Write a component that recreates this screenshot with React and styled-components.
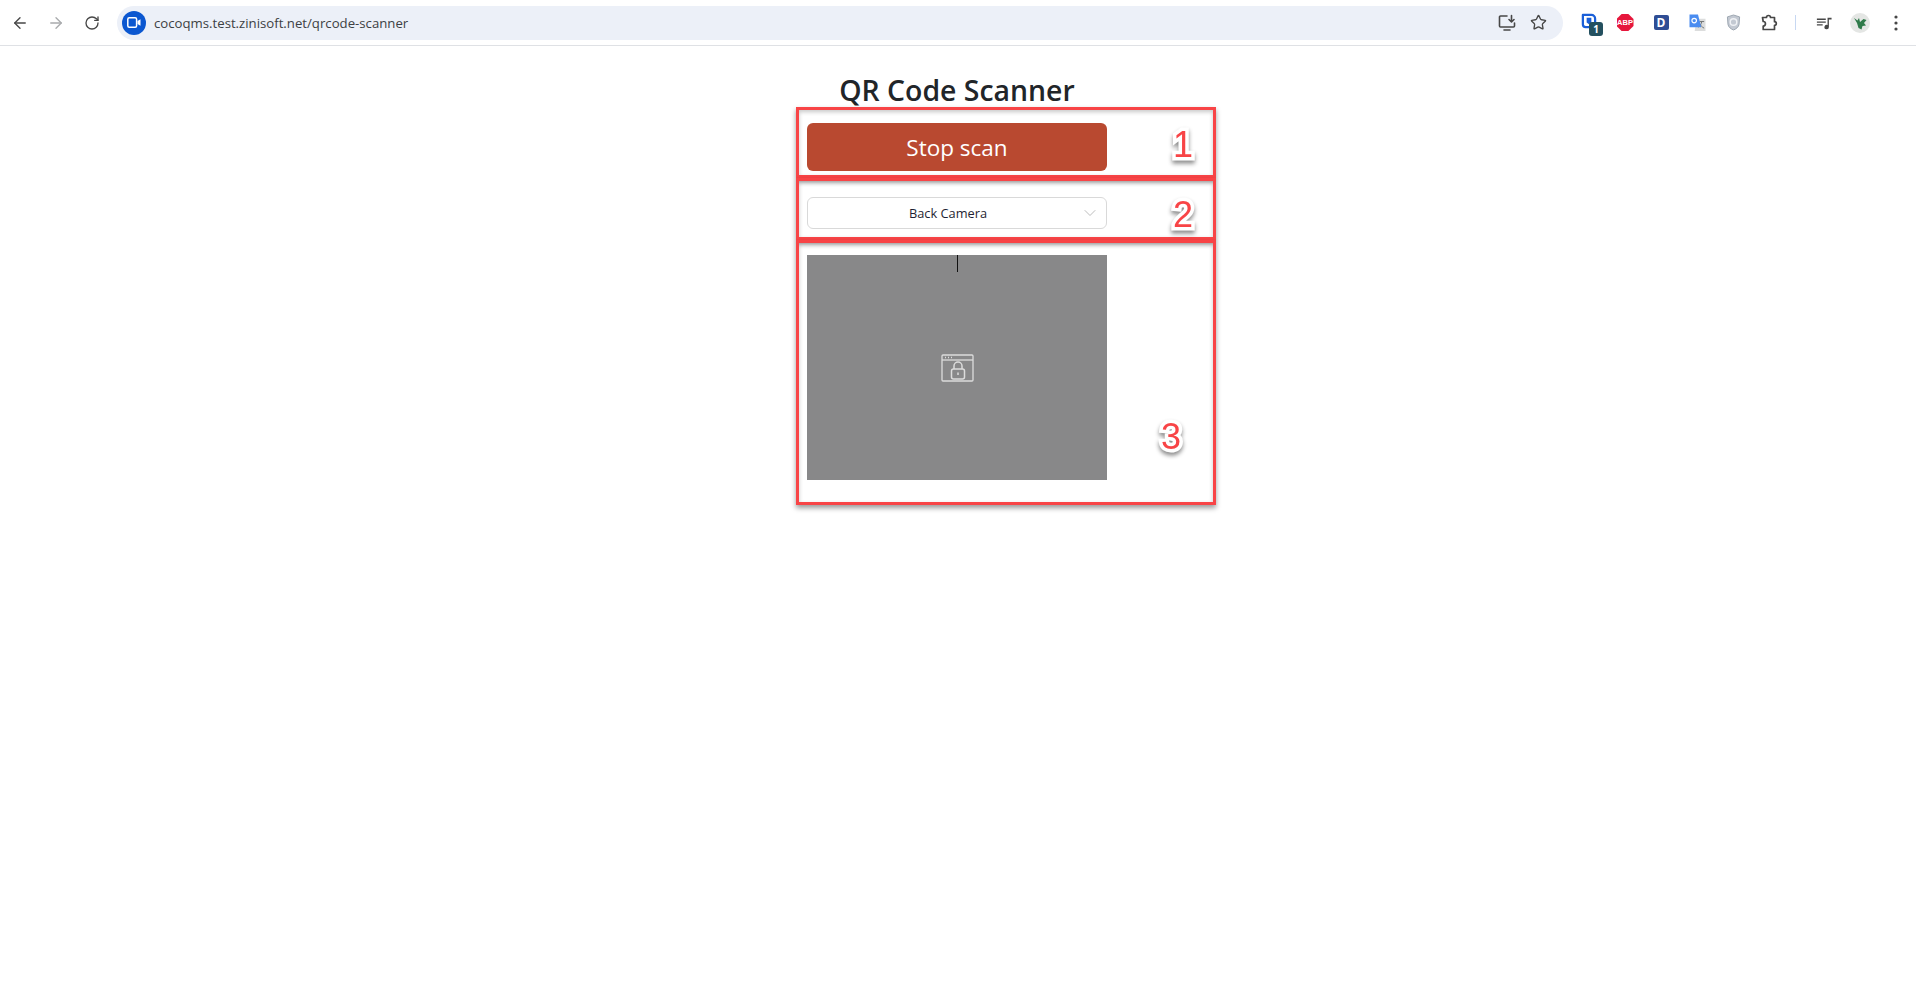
import React from "react";
import styled, { createGlobalStyle } from "styled-components";
import { ArrowLeft, ArrowRight, RotateCw, Star, ChevronDown } from "lucide-react";

const Global = createGlobalStyle`
  html, body { margin: 0; padding: 0; background: #fff; }
  body { font-family: "Open Sans", "Noto Sans", sans-serif; height: 986px; overflow: hidden; }
`;

const Toolbar = styled.header`
  height: 45px;
  border-bottom: 1px solid #dfe1e5;
  display: flex;
  align-items: center;
  box-sizing: content-box;
`;
const NavGroup = styled.div`
  display: flex;
  align-items: center;
  width: 117px;
  padding-left: 10px;
  gap: 16px;
  flex: none;
  box-sizing: border-box;
`;
const NavButton = styled.span`
  width: 20px;
  height: 20px;
  display: flex;
  align-items: center;
  justify-content: center;
  color: ${(p) => (p.$off ? "#a9abad" : "#474747")};
`;
const Omnibox = styled.div`
  width: 1446px;
  flex: none;
  height: 34px;
  border-radius: 17px;
  background: #ecf0f8;
  display: flex;
  align-items: center;
  padding: 0 16px 0 5px;
  box-sizing: border-box;
`;
const SiteBadge = styled.span`
  width: 24px;
  height: 24px;
  border-radius: 50%;
  background: #0b57d0;
  display: flex;
  align-items: center;
  justify-content: center;
  flex: none;
`;
const Url = styled.span`
  margin-left: 8px;
  font-family: "Open Sans", "Noto Sans", sans-serif;
  font-size: 13.2px;
  color: #3c4043;
  flex: 1;
`;
const OmniIcons = styled.div`
  display: flex;
  align-items: center;
  gap: 14px;
  color: #474747;
`;
const Extensions = styled.div`
  display: flex;
  align-items: center;
  margin-left: 8px;
  flex: 1;
`;
const ExtSlot = styled.span`
  width: 36px;
  height: 24px;
  display: flex;
  align-items: center;
  justify-content: center;
  position: relative;
  flex: none;
`;
const CountBadge = styled.span`
  position: absolute;
  left: 18px;
  top: 11px;
  width: 14px;
  height: 14px;
  border-radius: 3px;
  background: #24505f;
  color: #fff;
  font: 700 10px/14px "Open Sans", sans-serif;
  text-align: center;
`;
const Abp = styled.span`
  width: 17px;
  height: 17px;
  background: #e6173c;
  clip-path: polygon(30% 0, 70% 0, 100% 30%, 100% 70%, 70% 100%, 30% 100%, 0 70%, 0 30%);
  color: #fff;
  font: 700 7.5px/17px "Liberation Sans", sans-serif;
  text-align: center;
`;
const DTile = styled.span`
  width: 15px;
  height: 15px;
  border-radius: 2px;
  background: #2f4d94;
  color: #fff;
  font: 700 12px/15px "Open Sans", sans-serif;
  text-align: center;
`;
const Divider = styled.span`
  width: 1px;
  height: 15px;
  background: #c7d8f2;
  margin: 0 10px 0 8px;
  flex: none;
`;

const Page = styled.main`
  position: relative;
  display: flex;
  flex-direction: column;
  align-items: center;
  padding-right: 2px;
`;
const Title = styled.h1`
  margin: 19px 0 0;
  height: 50px;
  font-family: "Open Sans", sans-serif;
  font-size: 28.4px;
  line-height: 50px;
  font-weight: 600;
  color: #212529;
  white-space: nowrap;
`;
const Scanner = styled.section`
  width: 300px;
  display: flex;
  flex-direction: column;
  margin-top: 8px;
`;
const StopButton = styled.button`
  width: 300px;
  height: 48px;
  border: 0;
  border-radius: 6px;
  background: #b94930;
  color: #fff;
  font-family: "Open Sans", sans-serif;
  font-size: 22.5px;
  padding: 0;
`;
const CameraSelect = styled.div`
  margin-top: 26px;
  height: 32px;
  border: 1px solid #d9d9d9;
  border-radius: 6px;
  box-sizing: border-box;
  position: relative;
  display: flex;
  align-items: center;
  justify-content: center;
  padding-right: 18px;
  font-size: 12.8px;
  color: #1f1f33;
  background: #fff;
`;
const Caret = styled.span`
  position: absolute;
  right: 6px;
  top: 5px;
  color: #bdbdbd;
  display: flex;
`;
const Video = styled.div`
  margin-top: 26px;
  width: 300px;
  height: 225px;
  background: #888889;
  position: relative;
  display: flex;
  align-items: center;
  justify-content: center;
`;
const Cursor = styled.span`
  position: absolute;
  left: 150px;
  top: 0;
  width: 1px;
  height: 17px;
  background: #111;
`;
const Callout = styled.div`
  position: absolute;
  left: 796px;
  top: ${(p) => p.$top}px;
  width: 420px;
  height: ${(p) => p.$h}px;
  box-sizing: border-box;
  border: 3px solid #f84446;
  box-shadow: 0 3px 5px rgba(0, 0, 0, 0.4), inset 0 2px 4px rgba(0, 0, 0, 0.22);
  pointer-events: none;
`;
const Digit = styled.span`
  position: absolute;
  left: ${(p) => p.$left}px;
  top: ${(p) => p.$top}px;
  font-family: "Liberation Sans", sans-serif;
  font-size: 36px;
  line-height: 36px;
  color: #f84446;
  -webkit-text-stroke: 7px #fff;
  paint-order: stroke fill;
  filter: drop-shadow(0 3px 2px rgba(0, 0, 0, 0.45));
`;
const ShieldSvg = styled.svg`
  margin-top: -3px;
`;

const stroke = { fill: "none", stroke: "currentColor", strokeLinecap: "round", strokeLinejoin: "round" };

const MonitorDownIcon = () => (
  <svg width="18" height="18" viewBox="0 0 18 18" {...stroke} strokeWidth="1.6">
    <path d="M9 2H2.5a1 1 0 0 0-1 1v9a1 1 0 0 0 1 1h13a1 1 0 0 0 1-1V9" />
    <path d="M6 16h6M13.5 1.5v6M11 5.5l2.5 2.5L16 5.5" />
  </svg>
);
const ShieldTile = () => (
  <ShieldSvg width="16" height="16" viewBox="0 0 17 17">
    <path d="M2 2h9a4 4 0 0 1 4 4v9H5a3 3 0 0 1-3-3z" fill="none" stroke="#1a5fd8" strokeWidth="2.4" strokeLinejoin="round" />
    <path d="M6 5h5v5l-2.5 2L6 10z" fill="#1a5fd8" />
  </ShieldSvg>
);
const TranslateIcon = () => (
  <svg width="17" height="17" viewBox="0 0 18 18">
    <path d="M8 5h9.5v13H6z" fill="#dcdddd" />
    <path d="M11 8h5M13.5 8c-.5 3-2 5-4 6M11 10c1 2 3 4 5 5" fill="none" stroke="#6b7070" strokeWidth="1" />
    <path d="M0.5 0.5H9.5L13 14H0.5z" fill="#4a8cf0" />
    <circle cx="5.5" cy="7" r="2.4" fill="none" stroke="#fff" strokeWidth="1.2" />
  </svg>
);
const GuardIcon = () => (
  <svg width="15" height="17" viewBox="0 0 16 18">
    <path d="M8 1l6.5 2-.6 8c-.4 3-3.4 5-5.9 6-2.5-1-5.5-3-5.9-6L1.500 3z" fill="#c3c9d2" stroke="#9aa3ae" strokeWidth="1" />
    <circle cx="8" cy="8.500" r="3.500" fill="none" stroke="#f0f2f5" strokeWidth="1.500" />
  </svg>
);
const PuzzleIcon = () => (
  <svg width="18" height="18" viewBox="0 0 18 18" {...stroke} strokeWidth="1.700" color="#474747">
    <path d="M2.500 3.500H6.500a2 2 0 0 1 4 0h4v4.200a1.800 1.800 0 0 1 0 3.600V15.500H3.200V12a2 2 0 0 0 0-4.500z" />
  </svg>
);
const QueueIcon = () => (
  <svg width="16" height="16" viewBox="0 0 18 18" color="#474747" fill="currentColor">
    <path d="M1 4h10v1.500H1zM1 7.200h10v1.500H1zM1 10.400h6.500v1.500H1z" />
    <path d="M13 3h4.500v2H14.500v8.500a2.500 2.500 0 1 1-1.500-2.300z" />
  </svg>
);
const AvatarIcon = () => (
  <svg width="20" height="20" viewBox="0 0 20 20">
    <circle cx="10" cy="10" r="10" fill="#e4e6e4" />
    <path d="M4 5l3.500 2.500L9 5l1 4 3.500-3 3 1-2.500 3 2 2.500-3.500.5-1 3.500-3-1.500-1.500-5z" fill="#2f7a4a" />
  </svg>
);
const KebabIcon = () => (
  <svg width="6" height="16" viewBox="0 0 6 16" fill="#474747">
    <circle cx="3" cy="2" r="1.600" />
    <circle cx="3" cy="8" r="1.600" />
    <circle cx="3" cy="14" r="1.600" />
  </svg>
);
const BlockedCamera = () => (
  <svg width="33" height="28" viewBox="0 0 33 28" fill="none" stroke="#dcdcdc" strokeWidth="1.300">
    <rect x="1" y="1" width="31" height="26" rx="1" />
    <path d="M1 6h31" />
    <path d="M4 3.500h1M7 3.500h1M10 3.500h1" strokeWidth="1.500" />
    <rect x="10.500" y="15" width="13" height="10" rx="2" strokeWidth="1.500" />
    <path d="M13 15v-3a4 4 0 0 1 8 0v3M17 18.500v2.500" strokeWidth="1.500" />
  </svg>
);

export default function App() {
  return (
    <>
      <Global />
      <Toolbar>
        <NavGroup>
          <NavButton><ArrowLeft size={18} strokeWidth={1.8} /></NavButton>
          <NavButton $off><ArrowRight size={18} strokeWidth={1.8} /></NavButton>
          <NavButton><RotateCw size={16} strokeWidth={2} /></NavButton>
        </NavGroup>
        <Omnibox>
          <SiteBadge>
            <svg width="14" height="11" viewBox="0 0 14 11">
              <rect x="0.800" y="0.800" width="8.800" height="9.400" rx="1.500" fill="none" stroke="#fff" strokeWidth="1.500" />
              <path d="M10.500 4l3-1.800v6.600l-3-1.800z" fill="#fff" />
            </svg>
          </SiteBadge>
          <Url>cocoqms.test.zinisoft.net/qrcode-scanner</Url>
          <OmniIcons>
            <MonitorDownIcon />
            <Star size={17} strokeWidth={1.900} />
          </OmniIcons>
        </Omnibox>
        <Extensions>
          <ExtSlot><ShieldTile /><CountBadge>1</CountBadge></ExtSlot>
          <ExtSlot><Abp>ABP</Abp></ExtSlot>
          <ExtSlot><DTile>D</DTile></ExtSlot>
          <ExtSlot><TranslateIcon /></ExtSlot>
          <ExtSlot><GuardIcon /></ExtSlot>
          <ExtSlot><PuzzleIcon /></ExtSlot>
          <Divider />
          <ExtSlot><QueueIcon /></ExtSlot>
          <ExtSlot><AvatarIcon /></ExtSlot>
          <ExtSlot><KebabIcon /></ExtSlot>
        </Extensions>
      </Toolbar>
      <Page>
        <Title>QR Code Scanner</Title>
        <Scanner>
          <StopButton>Stop scan</StopButton>
          <CameraSelect>
            Back Camera
            <Caret><ChevronDown size={20} strokeWidth={1.2} /></Caret>
          </CameraSelect>
          <Video>
            <Cursor />
            <BlockedCamera />
          </Video>
        </Scanner>
        <Callout $top={61} $h={71} />
        <Callout $top={132} $h={62} />
        <Callout $top={194} $h={265} />
        <Digit $left={1173} $top={81}>1</Digit>
        <Digit $left={1173} $top={151}>2</Digit>
        <Digit $left={1161} $top={373}>3</Digit>
      </Page>
    </>
  );
}
